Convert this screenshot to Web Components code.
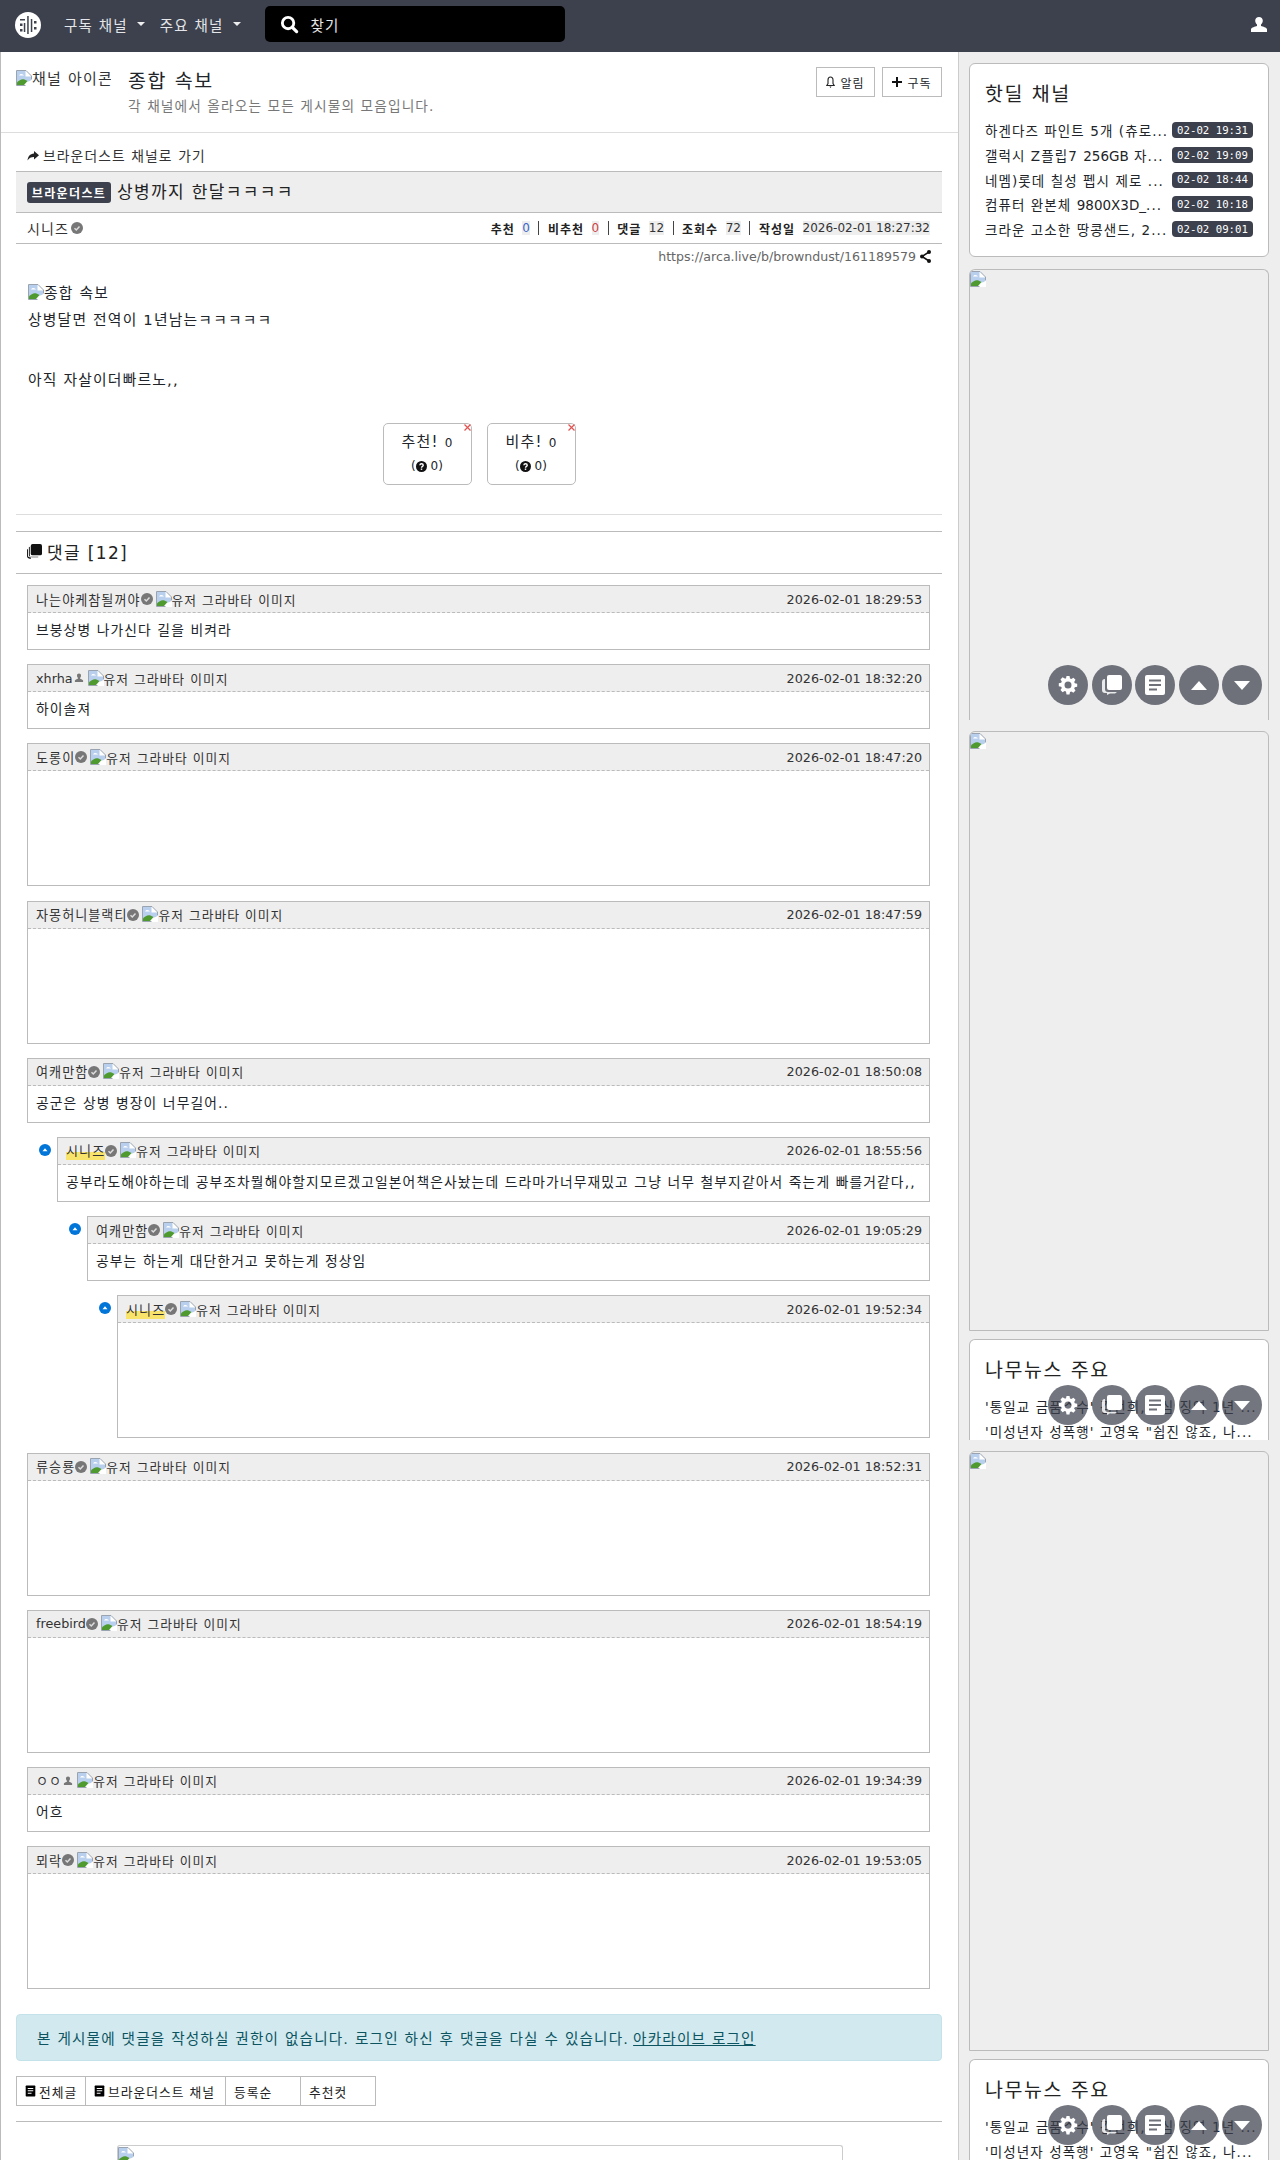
<!DOCTYPE html>
<html lang="ko">
<head>
<meta charset="utf-8">
<title>상병까지 한달ㅋㅋㅋㅋ</title>
<style>
  html, body { margin: 0; padding: 0; background: #fff; }
  body {
    width: 1280px;
    height: 2160px;
    overflow: hidden;
    position: relative;
    font-family: "DejaVu Sans", "Noto Sans CJK KR", sans-serif;
    color: #212529;
  }
  .layout { display: flex; height: 2108px; overflow: hidden; }
</style>
</head>
<body>
<top-nav></top-nav>
<div class="layout">
  <main-column></main-column>
  <side-column></side-column>
</div>
<float-tools style="top:665px"></float-tools>
<float-tools style="top:1385px"></float-tools>
<float-tools style="top:2105px"></float-tools>

<script>
const DOC_ICON = `<svg width="100%" height="100%" viewBox="0 0 16 16"><path fill="currentColor" d="M2 0h12a1 1 0 0 1 1 1v14a1 1 0 0 1-1 1H2a1 1 0 0 1-1-1V1a1 1 0 0 1 1-1z"/><path fill="var(--doc-line,#fff)" d="M4 3.500h8V5H4zM4 7h8v1.500H4zM4 10.500h5.500V12H4z"/></svg>`;

// hangul in the reference has a 1em advance, Noto's is .92em
const HANGUL_SPACING = 'letter-spacing: .08em;';

class BrokenImg extends HTMLElement {
  constructor() {
    super();
    this.attachShadow({ mode: 'open' }).innerHTML = `
      <style>
        :host { display: inline-block; white-space: nowrap; vertical-align: baseline; }
        svg { width: 16px; height: 16px; vertical-align: -2px; }
      </style>
      <svg viewBox="0 0 16 16">
        <path fill="#fff" stroke="#9aa3b0" d="M.5.5h9.500l5.500 5.500v9.500H.5z"/>
        <path fill="#b9cfee" d="M1 1h8.500v5.500H15V11L1 13z"/>
        <path fill="#fff" d="M3 5.500c.5-1.500 2.500-2 4-1L8 5.500z"/>
        <path fill="#4e9a2e" d="M1 15v-2.500C3 10 6 8.500 8.500 9.500L11.500 11 8 15z"/>
        <path fill="#fff" d="M9 16l7-7v7z"/>
      </svg><slot></slot>`;
  }
}
customElements.define('broken-img', BrokenImg);

class TopNav extends HTMLElement {
  constructor() {
    super();
    this.attachShadow({ mode: 'open' }).innerHTML = `
      <style>
        :host { display: flex; align-items: center; height: 52px; box-sizing: border-box; padding-bottom: 4px; background: #3d414d; color: #fff; font-size: 14.500px; letter-spacing: .08em; position: relative; }
        .logo { width: 26px; height: 26px; margin: 2px 0 0 15px; }
        .menu { display: flex; align-items: center; color: #e4e6ea; }
        .caret { width: 0; height: 0; border-top: 4px solid #eee; border-left: 4px solid transparent; border-right: 4px solid transparent; margin-left: 9px; }
        .m1 { margin-left: 23px; }
        .m2 { margin-left: 15px; }
        .search { display: flex; align-items: center; background: #000; border-radius: 5px; width: 300px; height: 36px; margin-left: 24px; box-sizing: border-box; padding-left: 15px; color: #e6e6e6; }
        .search svg { width: 19px; height: 19px; margin-right: 12px; }
        .user { position: absolute; right: 13px; top: 17px; width: 16px; height: 15px; }
      </style>
      <svg class="logo" viewBox="0 0 26 26">
        <circle cx="13" cy="13" r="13" fill="#fff"/>
        <path fill="#3d414d" d="M12.200 4h1.500v18h-1.500zM5 7h5v1.500H5zM5 11.500h2.500V14H5zM8.800 11h1.500v9H8.800zM5 17h2.500v2.500H5zM15.800 7h1.500v13h-1.500zM19 9h2.500v2.500H19zM19 15h2.500v2.500H19z"/>
      </svg>
      <div class="menu m1">구독 채널<span class="caret"></span></div>
      <div class="menu m2">주요 채널<span class="caret"></span></div>
      <div class="search">
        <svg viewBox="0 0 20 20"><circle cx="8.500" cy="8.500" r="6" fill="none" stroke="#fff" stroke-width="3"/><path stroke="#fff" stroke-width="3.400" stroke-linecap="round" d="M13 13l4.500 4.500"/></svg>
        찾기
      </div>
      <svg class="user" viewBox="0 0 16 17" preserveAspectRatio="none"><path fill="#fff" d="M8 0c2.300 0 3.800 1.800 3.800 4.300 0 1.700-.7 3.200-1.800 4.200v1.800c2 .6 5.500 1.600 6 3.700v3H0v-3c.5-2.100 4-3.100 6-3.700V8.500C4.900 7.500 4.200 6 4.200 4.300 4.200 1.800 5.700 0 8 0z"/></svg>`;
  }
}
customElements.define('top-nav', TopNav);

class OutlineButton extends HTMLElement {
  constructor() {
    super();
    this.attachShadow({ mode: 'open' }).innerHTML = `
      <style>
        :host { display: inline-flex; align-items: center; justify-content: center; height: 30px; box-sizing: border-box; border: 1px solid #bbb; font-size: 12px; letter-spacing: .08em; background: #fff; color: #212529; gap: 5px; }
      </style>
      <slot></slot>`;
  }
}
customElements.define('outline-button', OutlineButton);

class ChannelHead extends HTMLElement {
  constructor() {
    super();
    this.attachShadow({ mode: 'open' }).innerHTML = `
      <style>
        :host { display: flex; height: 81px; box-sizing: border-box; border-bottom: 1px solid #ddd; padding: 15px 16px 0 16px; position: relative; }
        .icon { width: 95px; height: 22px; overflow: hidden; font-size: 15px; ${HANGUL_SPACING} color: #333; flex: none; box-sizing: border-box; }
        .text { margin-left: 17px; flex: 1; }
        .title { font-size: 19.500px; ${HANGUL_SPACING} line-height: 24px; margin-top: 3px; color: #212529; }
        .sub { font-size: 13.700px; ${HANGUL_SPACING} color: #777; margin-top: 4px; line-height: 16px; }
        .btns { display: flex; gap: 7px; }
        .b1 { width: 59px; }
        .b2 { width: 60px; }
      </style>
      <div class="icon"><broken-img>채널 아이콘</broken-img></div>
      <div class="text">
        <div class="title">종합 속보</div>
        <div class="sub">각 채널에서 올라오는 모든 게시물의 모음입니다.</div>
      </div>
      <div class="btns">
        <outline-button class="b1"><svg width="9" height="13" viewBox="0 0 9 13"><path fill="none" stroke="#222" stroke-width="1.100" d="M4.500 1C3 1 2 2.200 2 4v3.500L.8 9.500h7.400L7 7.500V4C7 2.200 6 1 4.500 1z"/><path fill="#222" d="M3.500 10.500h2L4.500 12z"/></svg>알림</outline-button>
        <outline-button class="b2"><svg width="10" height="10" viewBox="0 0 10 10"><path fill="#111" d="M4 0h2v4h4v2H6v4H4V6H0V4h4z"/></svg>구독</outline-button>
      </div>`;
  }
}
customElements.define('channel-head', ChannelHead);

class VoteBox extends HTMLElement {
  constructor() {
    super();
    const label = this.getAttribute('label');
    this.attachShadow({ mode: 'open' }).innerHTML = `
      <style>
        :host { display: block; text-align: center; width: 89px; height: 62px; box-sizing: border-box; border: 1px solid #bbb; border-radius: 5px; position: relative; padding-top: 8px; color: #212529; }
        .top { font-size: 15px; line-height: 20px; letter-spacing: .08em; }
        .top small { font-size: 12px; letter-spacing: 0; }
        .bottom { font-size: 12px; line-height: 20px; margin-top: 3px; }
        .bottom svg { width: 11px; height: 11px; vertical-align: -1.500px; }
        .x { position: absolute; top: 0; right: 0; width: 7px; height: 7px; }
      </style>
      <svg class="x" viewBox="0 0 7 7"><path stroke="#e25555" stroke-width="1.300" d="M.5.5l6 6M6.500.5l-6 6"/></svg>
      <div class="top">${label} <small>0</small></div>
      <div class="bottom">(<svg viewBox="0 0 12 12"><circle cx="6" cy="6" r="6" fill="#111"/><path fill="none" stroke="#fff" stroke-width="1.500" d="M4.200 4.600C4.300 3.500 5 3 6 3c1.100 0 1.900.6 1.900 1.600 0 1.300-1.900 1.300-1.900 2.700"/><rect x="5.200" y="8.200" width="1.600" height="1.500" fill="#fff"/></svg> 0)</div>`;
  }
}
customElements.define('vote-box', VoteBox);

class ArticleView extends HTMLElement {
  constructor() {
    super();
    this.attachShadow({ mode: 'open' }).innerHTML = `
      <style>
        :host { display: block; padding: 0 16px; }
        .crumb { height: 39px; padding-left: 11px; display: flex; align-items: flex-end; gap: 4px; font-size: 13.800px; ${HANGUL_SPACING} line-height: 16px; color: #333; padding-bottom: 8px; box-sizing: border-box; }
        .crumb svg { width: 12px; height: 10px; margin-bottom: 3px; }
        .title { height: 42px; box-sizing: border-box; background: #eee; border-top: 1px solid #bbb; border-bottom: 1px solid #bbb; display: flex; align-items: center; padding: 0 11px 3px; font-size: 17px; ${HANGUL_SPACING} color: #222; margin-top: -1px; }
        .badge { background: #3d414d; color: #fff; font-size: 12px; font-weight: 700; border-radius: 3px; height: 21px; width: 84px; display: flex; align-items: center; justify-content: center; margin: 4px 6px 0 0; }
        .info { height: 31px; box-sizing: border-box; border-bottom: 1px solid #bbb; display: flex; align-items: center; padding: 0 12px 0 11px; font-size: 14px; color: #333; }
        .info .who { display: flex; align-items: center; gap: 2px; flex: 1; ${HANGUL_SPACING} }
        .stats { display: flex; align-items: center; font-size: 12px; color: #333; }
        .stats b { font-size: 12px; ${HANGUL_SPACING} color: #222; margin-right: 7.600px; }
        .stats span { background: #eee; }
        .stats i { width: 1px; height: 14px; background: #444; margin: 0 8.500px; }
        .blue { color: #3d66c9; }
        .red { color: #c44; }
        .url { height: 25px; display: flex; align-items: center; justify-content: flex-end; gap: 4px; padding-right: 11px; font-size: 12.600px; color: #666; }
        .url svg { width: 11px; height: 13px; }
        .body { padding: 14px 12px 0; font-size: 14.800px; ${HANGUL_SPACING} line-height: 20px; color: #212529; height: 153px; box-sizing: border-box; }
        .body p { margin: 0; }
        .votes { display: flex; justify-content: center; gap: 15px; margin-top: 1px; }
        .rule { border-top: 1px solid #ddd; margin-top: 29px; }
        .rule2 { border-top: 1px solid #bbb; margin-top: 16px; }
        .chead { height: 42px; box-sizing: border-box; border-bottom: 1px solid #bbb; display: flex; align-items: center; gap: 5px; padding: 0 0 2px 11px; font-size: 17px; ${HANGUL_SPACING} color: #222; }
        .chead svg { width: 15px; height: 15px; }
      </style>
      <div class="crumb"><svg viewBox="0 0 12 10"><path fill="#222" d="M7 0l5 4.200L7 8.500V6C4 6 2 7 .5 9.500 1 5.500 3 2.800 7 2.500z"/></svg>브라운더스트 채널로 가기</div>
      <div class="title"><span class="badge">브라운더스트</span>상병까지 한달ㅋㅋㅋㅋ</div>
      <div class="info">
        <div class="who">시니즈<user-mark type="check"></user-mark></div>
        <div class="stats">
          <b>추천</b><span class="blue">0</span><i></i>
          <b>비추천</b><span class="red">0</span><i></i>
          <b>댓글</b><span>12</span><i></i>
          <b>조회수</b><span>72</span><i></i>
          <b>작성일</b><span>2026-02-01 18:27:32</span>
        </div>
      </div>
      <div class="url">https://arca.live/b/browndust/161189579<svg viewBox="0 0 11 13"><path fill="none" stroke="#111" stroke-width="1.500" d="M9 2L2 6.500 9 11"/><circle cx="9" cy="2" r="2" fill="#111"/><circle cx="2" cy="6.500" r="2" fill="#111"/><circle cx="9" cy="11" r="2" fill="#111"/></svg></div>
      <div class="body">
        <p><broken-img>종합 속보</broken-img></p>
        <p style="margin-top:7px">상병달면 전역이 1년남는ㅋㅋㅋㅋㅋ</p>
        <p style="margin-top:40px">아직 자살이더빠르노,,</p>
      </div>
      <div class="votes"><vote-box label="추천!"></vote-box><vote-box label="비추!"></vote-box></div>
      <div class="rule"></div>
      <div class="rule2"></div>
      <div class="chead"><svg viewBox="0 0 16 16"><path fill="#111" d="M6 0h8a2 2 0 0 1 2 2v8a2 2 0 0 1-2 2H6a2 2 0 0 1-2-2V2a2 2 0 0 1 2-2z"/><path fill="#111" d="M3 3v9a2 2 0 0 0 2 2h7v-.5H3.500A2 2 0 0 1 2 12V3.500zM0 6v7a3 3 0 0 0 2 2.500L4 16v-2H2.500A1.500 1.500 0 0 1 1 12.500V5z"/></svg>댓글 [12]</div>`;
  }
}
customElements.define('article-view', ArticleView);

class UserMark extends HTMLElement {
  constructor() {
    super();
    const isCheck = this.getAttribute('type') !== 'user';
    this.attachShadow({ mode: 'open' }).innerHTML = `
      <style>
        :host { display: inline-block; width: 12px; height: 12px; flex: none; vertical-align: -1px; }
        svg { display: block; width: 12px; height: 12px; }
      </style>
      ${isCheck
        ? '<svg viewBox="0 0 12 12"><circle cx="6" cy="6" r="6" fill="#777"/><path fill="none" stroke="#ddd" stroke-width="1.500" d="M3.500 6.200l1.800 1.800 3.200-3.600"/></svg>'
        : '<svg viewBox="0 0 12 12"><path fill="#777" d="M6 1.500c1.300 0 2 .9 2 2.200 0 .9-.4 1.600-.9 2v1c1 .3 2.700.8 3 1.800v1.500H1.900V8.500c.3-1 2-1.500 3-1.800v-1c-.5-.4-.9-1.100-.9-2 0-1.300.7-2.200 2-2.200z"/></svg>'}`;
  }
}
customElements.define('user-mark', UserMark);

class CommentItem extends HTMLElement {
  constructor() {
    super();
    const depth = +(this.getAttribute('depth') || 0);
    const mark = this.getAttribute('mark') || 'check';
    const mine = this.hasAttribute('mine');
    const tall = this.hasAttribute('tall');
    const name = this.getAttribute('name');
    const latin = /^[a-z]+$/i.test(name);
    this.attachShadow({ mode: 'open' }).innerHTML = `
      <style>
        :host { display: block; position: relative; margin-left: ${depth * 30}px; border: 1px solid #bbb; box-sizing: border-box; }
        .head { height: 27px; box-sizing: border-box; background: #eee; border-bottom: 1px dashed #bbb; display: flex; align-items: center; padding: 0 7px 0 8px; font-size: 12.750px; ${HANGUL_SPACING} color: #333; }
        .who { display: flex; align-items: center; }
        .name { ${latin ? 'letter-spacing: 0;' : 'font-size: 13.100px;'} ${mine ? 'background: linear-gradient(transparent 60%, #f9e46b 60%);' : ''} }
        broken-img { margin-left: 3px; }
        .date { margin-left: auto; letter-spacing: 0; }
        .body { ${tall ? 'height: 114px;' : 'height: 36px;'} padding: 8px 8px 0; box-sizing: border-box; font-size: 13.800px; ${HANGUL_SPACING} line-height: 18px; color: #212529; white-space: nowrap; }
        .dot { position: absolute; left: -19px; top: 6px; width: 12px; height: 12px; }
      </style>
      ${depth ? '<svg class="dot" viewBox="0 0 12 12"><circle cx="6" cy="6" r="6" fill="#0275d8"/><path fill="#fff" d="M3.500 7.200L6 4.300l2.500 2.900z"/></svg>' : ''}
      <div class="head">
        <div class="who"><span class="name">${name}</span><user-mark type="${mark}"></user-mark></div>
        <broken-img>유저 그라바타 이미지</broken-img>
        <span class="date">${this.getAttribute('date')}</span>
      </div>
      <div class="body"><slot></slot></div>`;
  }
}
customElements.define('comment-item', CommentItem);

class CommentList extends HTMLElement {
  constructor() {
    super();
    this.attachShadow({ mode: 'open' }).innerHTML = `
      <style>
        :host { display: flex; flex-direction: column; gap: 14.200px; padding: 11px 28px 0 27px; }
      </style>
      <slot></slot>`;
  }
}
customElements.define('comment-list', CommentList);

class FooterBits extends HTMLElement {
  constructor() {
    super();
    this.attachShadow({ mode: 'open' }).innerHTML = `
      <style>
        :host { display: block; padding: 0 16px; }
        .alert { height: 47px; box-sizing: border-box; background: #d1e9ef; border: 1px solid #c4e2ea; border-radius: 4px; display: flex; align-items: center; padding-left: 20px; color: #0c5460; font-size: 14.600px; ${HANGUL_SPACING} gap: 4px; margin-top: 25px; }
        .alert a { color: #0c5460; text-decoration: underline; }
        .tabs { display: flex; margin-top: 15px; height: 30px; }
        .tab { box-sizing: border-box; border: 1px solid #bbb; border-left-width: 0; display: flex; align-items: center; padding-left: 8px; font-size: 12.750px; ${HANGUL_SPACING} color: #222; gap: 3px; --doc-line: #fff; }
        .tab:first-child { border-left-width: 1px; }
        .tab .ic { width: 11px; height: 12px; color: #000; flex: none; }
        .rule { border-top: 1px solid #bbb; margin-top: 15px; }
        .ad { margin: 23px 0 0 101px; width: 726px; height: 40px; box-sizing: border-box; border: 1px solid #ccc; border-radius: 3px 3px 0 0; border-bottom: 0; }
      </style>
      <div class="alert"><span>본 게시물에 댓글을 작성하실 권한이 없습니다. 로그인 하신 후 댓글을 다실 수 있습니다.</span><a>아카라이브 로그인</a></div>
      <div class="tabs">
        <div class="tab" style="width:70px"><span class="ic">${DOC_ICON}</span>전체글</div>
        <div class="tab" style="width:140px"><span class="ic">${DOC_ICON}</span>브라운더스트 채널</div>
        <div class="tab" style="width:75px">등록순</div>
        <div class="tab" style="width:75px">추천컷</div>
      </div>
      <div class="rule"></div>
      <div class="ad"><broken-img></broken-img></div>`;
  }
}
customElements.define('footer-bits', FooterBits);

const COMMENTS = [
  { name: '나는야케참될꺼야', date: '2026-02-01 18:29:53', text: '브붕상병 나가신다 길을 비켜라' },
  { name: 'xhrha', mark: 'user', date: '2026-02-01 18:32:20', text: '하이솔져' },
  { name: '도롱이', date: '2026-02-01 18:47:20', tall: true },
  { name: '자몽허니블랙티', date: '2026-02-01 18:47:59', tall: true },
  { name: '여캐만함', date: '2026-02-01 18:50:08', text: '공군은 상병 병장이 너무길어..' },
  { name: '시니즈', mine: true, depth: 1, date: '2026-02-01 18:55:56', text: '공부라도해야하는데 공부조차뭘해야할지모르겠고일본어책은사놨는데 드라마가너무재밌고 그냥 너무 철부지같아서 죽는게 빠를거같다,,' },
  { name: '여캐만함', depth: 2, date: '2026-02-01 19:05:29', text: '공부는 하는게 대단한거고 못하는게 정상임' },
  { name: '시니즈', mine: true, depth: 3, date: '2026-02-01 19:52:34', tall: true },
  { name: '류승룡', date: '2026-02-01 18:52:31', tall: true },
  { name: 'freebird', date: '2026-02-01 18:54:19', tall: true },
  { name: 'ㅇㅇ', mark: 'user', date: '2026-02-01 19:34:39', text: '어흐' },
  { name: '뫼락', date: '2026-02-01 19:53:05', tall: true },
];

class MainColumn extends HTMLElement {
  constructor() {
    super();
    const items = COMMENTS.map((c) => `<comment-item name="${c.name}" date="${c.date}"
      ${c.mark ? `mark="${c.mark}"` : ''} ${c.depth ? `depth="${c.depth}"` : ''}
      ${c.mine ? 'mine' : ''} ${c.tall ? 'tall' : ''}>${c.text || ''}</comment-item>`).join('');
    this.attachShadow({ mode: 'open' }).innerHTML = `
      <style>
        :host { display: block; width: 958px; flex: none; box-sizing: border-box; border-left: 1px solid #bbb; overflow: hidden; }
        channel-head, article-view, footer-bits, comment-list { margin-left: -1px; }
      </style>
      <channel-head></channel-head>
      <article-view></article-view>
      <comment-list>${items}</comment-list>
      <footer-bits></footer-bits>`;
  }
}
customElements.define('main-column', MainColumn);

class SideCard extends HTMLElement {
  constructor() {
    super();
    this.attachShadow({ mode: 'open' }).innerHTML = `
      <style>
        :host { display: block; box-sizing: border-box; border: 1px solid #bbb; border-radius: 6px 6px 0 0; overflow: hidden; flex: none; }
        :host([white]) { background: #fff; padding: 18px 15px 0; border-radius: 6px; }
        :host([cut]) { border-bottom-width: 0; border-radius: 6px 6px 0 0; }
        .t { display: none; font-size: 19.500px; letter-spacing: .08em; line-height: 26px; color: #222; margin-bottom: 10px; }
        :host([title]) .t { display: block; }
      </style>
      <div class="t">${this.getAttribute('title') || ''}</div>
      <slot></slot>`;
  }
}
customElements.define('side-card', SideCard);

class SideRow extends HTMLElement {
  constructor() {
    super();
    const time = this.getAttribute('time');
    this.attachShadow({ mode: 'open' }).innerHTML = `
      <style>
        :host { display: flex; align-items: center; height: 24.700px; font-size: 13.500px; color: #212529; gap: 6px; }
        .txt { flex: 1; min-width: 0; white-space: nowrap; letter-spacing: .08em; }
        .time { flex: none; background: #3d414d; color: #fff; font-family: "DejaVu Sans Mono", monospace; font-size: 10.700px; width: 81px; height: 16px; border-radius: 4px; display: flex; align-items: center; justify-content: center; }
      </style>
      <span class="txt"><slot></slot></span>
      ${time ? `<span class="time">${time}</span>` : ''}`;
  }
}
customElements.define('side-row', SideRow);

class SideColumn extends HTMLElement {
  constructor() {
    super();
    const news = `<side-row>'통일교 금품수수' 김건희, 1심 징역 1년 ...</side-row>
      <side-row>'미성년자 성폭행' 고영욱 "쉽진 않죠, 나...</side-row>`;
    this.attachShadow({ mode: 'open' }).innerHTML = `
      <style>
        :host { display: flex; flex-direction: column; flex: 1; background: #eee; border-left: 1px solid #ccc; box-sizing: border-box; padding: 11px 11px 0 10px; overflow: hidden; }
        .lat { letter-spacing: 0; }
      </style>
      <side-card white title="핫딜 채널" style="height:194px;margin-bottom:12px">
        <side-row time="02-02 19:31">하겐다즈 파인트 5개 (츄로...</side-row>
        <side-row time="02-02 19:09">갤럭시 Z플립7 <span class="lat">256GB</span> 자...</side-row>
        <side-row time="02-02 18:44">네멤)롯데 칠성 펩시 제로 ...</side-row>
        <side-row time="02-02 10:18">컴퓨터 완본체 <span class="lat">9800X3D_</span>...</side-row>
        <side-row time="02-02 09:01">크라운 고소한 땅콩샌드, 2...</side-row>
      </side-card>
      <side-card cut style="height:451px;margin-bottom:11px"><broken-img></broken-img></side-card>
      <side-card style="height:600px;margin-bottom:8px"><broken-img></broken-img></side-card>
      <side-card white cut title="나무뉴스 주요" style="height:101px;margin-bottom:11px">${news}</side-card>
      <side-card style="height:600px;margin-bottom:8px"><broken-img></broken-img></side-card>
      <side-card white cut title="나무뉴스 주요" style="height:101px">${news}</side-card>`;
  }
}
customElements.define('side-column', SideColumn);

class FloatTools extends HTMLElement {
  constructor() {
    super();
    const w = '#fff';
    this.attachShadow({ mode: 'open' }).innerHTML = `
      <style>
        :host { position: absolute; left: 1048px; display: flex; gap: 3.500px; }
        .b { width: 40px; height: 40px; border-radius: 50%; background: rgba(61,65,77,.72); display: flex; align-items: center; justify-content: center; }
        svg { display: block; }
      </style>
      <div class="b"><svg width="20" height="20" viewBox="0 0 20 20"><path fill="${w}" fill-rule="evenodd" d="M8.500 1h3l.5 2.400 1.300.6 2.100-1.300 2.100 2.100-1.300 2.100.6 1.300 2.400.5v3l-2.400.5-.6 1.300 1.300 2.100-2.100 2.100-2.100-1.300-1.300.6-.5 2.400h-3L8 16.500l-1.300-.6-2.100 1.300-2.100-2.100 1.300-2.100-.6-1.300L.8 11.300v-3l2.400-.5.6-1.300-1.300-2.100 2.100-2.100 2.100 1.300L8 3.400zM10 6.500a3.500 3.500 0 1 0 0 7 3.500 3.500 0 0 0 0-7z"/></svg></div>
      <div class="b"><svg width="20" height="20" viewBox="0 0 20 20"><path fill="${w}" d="M7 0h11a2 2 0 0 1 2 2v11a2 2 0 0 1-2 2H7a2 2 0 0 1-2-2V2a2 2 0 0 1 2-2z"/><path fill="${w}" d="M3 4v10a3 3 0 0 0 3 3h9l-2 1.500H8L5 20v-2H3a3 3 0 0 1-3-3V7a3 3 0 0 1 3-3z" opacity=".85"/></svg></div>
      <div class="b"><svg width="20" height="20" viewBox="0 0 20 20"><path fill="${w}" d="M2 0h16a2 2 0 0 1 2 2v16a2 2 0 0 1-2 2H2a2 2 0 0 1-2-2V2a2 2 0 0 1 2-2z"/><path fill="#70727a" d="M4 4.500h12v2H4zM4 9h12v2H4zM4 13.500h8v2H4z"/></svg></div>
      <div class="b"><svg width="16" height="9" viewBox="0 0 16 9"><path fill="${w}" d="M0 9L8 0l8 9z"/></svg></div>
      <div class="b"><svg width="16" height="9" viewBox="0 0 16 9"><path fill="${w}" d="M0 0l8 9 8-9z"/></svg></div>`;
  }
}
customElements.define('float-tools', FloatTools);
</script>
</body>
</html>
